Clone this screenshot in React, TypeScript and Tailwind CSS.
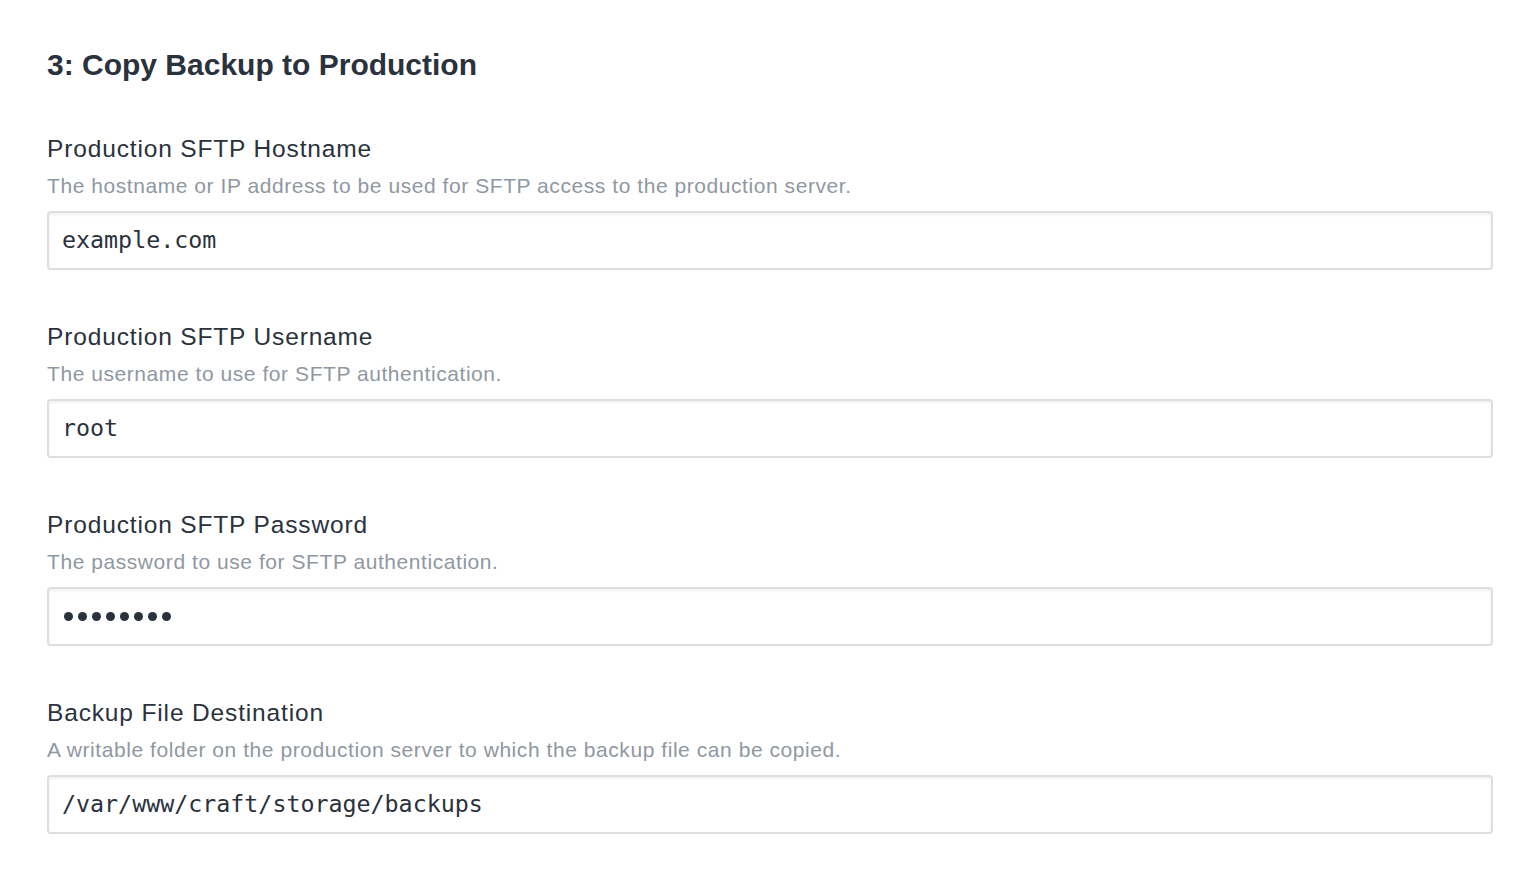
import React from "react";

const fields = [
  {
    label: "Production SFTP Hostname",
    help: "The hostname or IP address to be used for SFTP access to the production server.",
    value: "example.com",
  },
  {
    label: "Production SFTP Username",
    help: "The username to use for SFTP authentication.",
    value: "root",
  },
  {
    label: "Production SFTP Password",
    help: "The password to use for SFTP authentication.",
    value: "",
    password: true,
  },
  {
    label: "Backup File Destination",
    help: "A writable folder on the production server to which the backup file can be copied.",
    value: "/var/www/craft/storage/backups",
  },
];

export default function App() {
  return (
    <div className="min-h-[881px] bg-white px-[47px] pt-[47px] font-['Liberation_Sans',Arial,sans-serif] text-[#29323d]">
      <h2 className="text-[30px] font-bold leading-[36px]">
        3: Copy Backup to Production
      </h2>
      <div className="mt-[51px] flex flex-col gap-[52px]">
        {fields.map((f, idx) => (
          <div key={idx} className="flex flex-col">
            <label className="text-[24.5px] leading-[30px] tracking-[0.85px]">{f.label}</label>
            <p className="mt-[8px] text-[21px] leading-[28px] tracking-[0.56px] text-[#8f98a2]">{f.help}</p>
            <div className="mt-[11px] flex h-[59px] items-center rounded-[4px] border-2 border-[#dedede] bg-white px-[13px] shadow-[inset_0_2px_3px_rgba(0,0,0,0.06)]">
              {f.password ? (
                <div className="flex gap-[5px] pl-[2px]">
                  {Array.from({ length: 8 }).map((_, i) => (
                    <span key={i} className="block h-[9px] w-[9px] rounded-full bg-[#29323d]" />
                  ))}
                </div>
              ) : (
                <span className="font-['DejaVu_Sans_Mono',monospace] text-[23.3px] text-[#29323d]">
                  {f.value}
                </span>
              )}
            </div>
          </div>
        ))}
      </div>
    </div>
  );
}
